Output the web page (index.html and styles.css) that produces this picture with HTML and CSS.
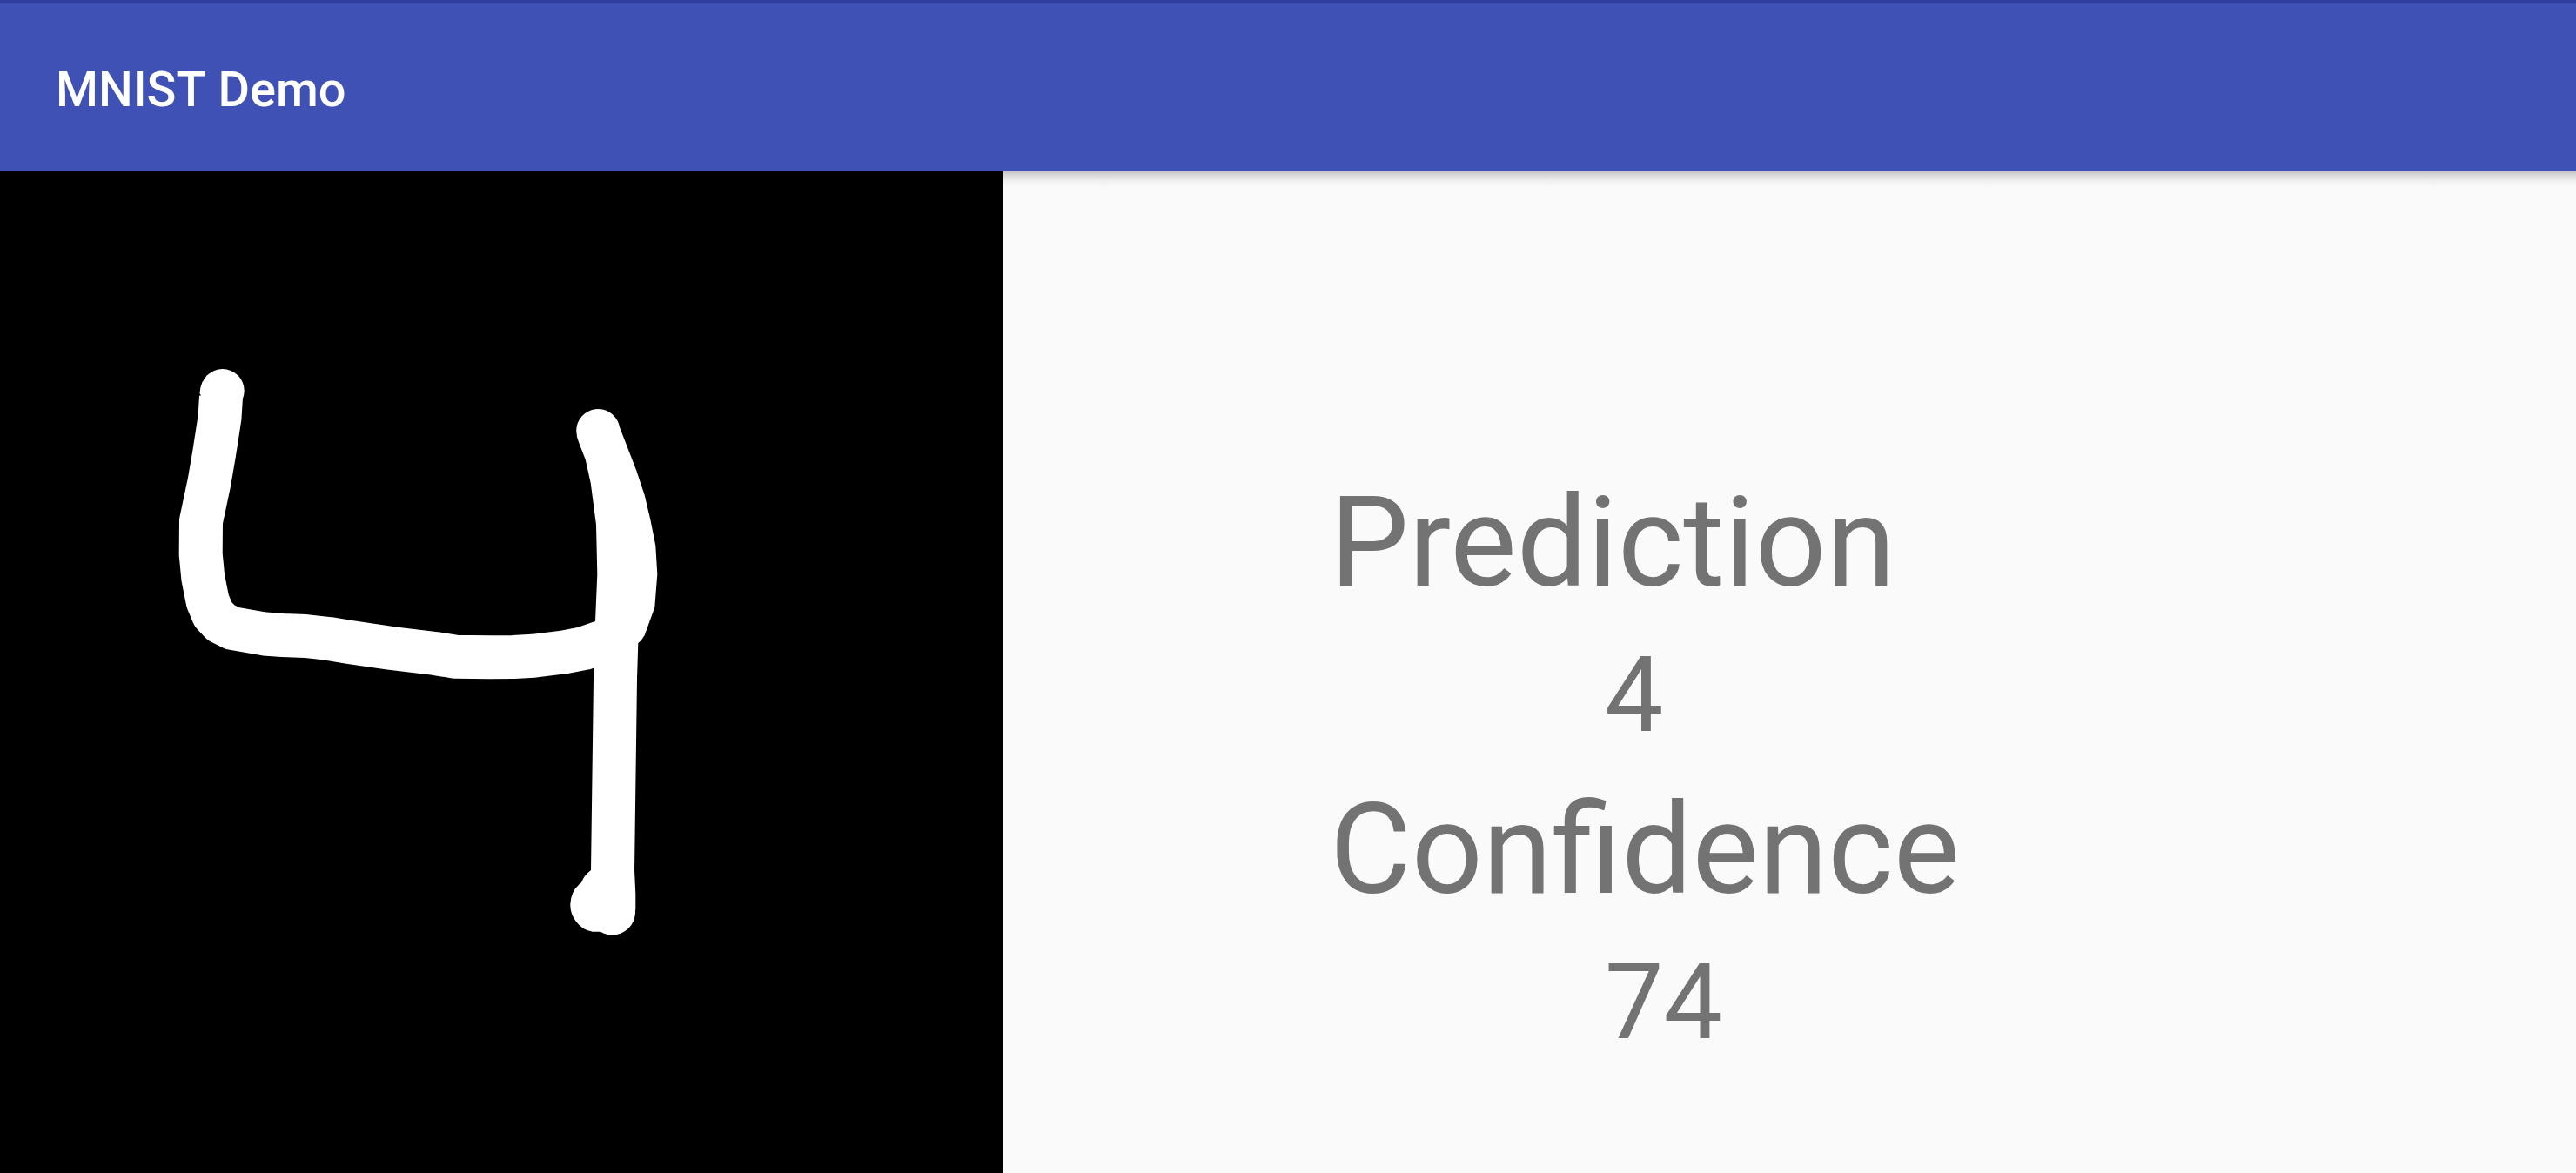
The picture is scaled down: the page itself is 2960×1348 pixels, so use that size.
FILE: index.html
```html
<!DOCTYPE html>
<html lang="en">
<head>
  <meta charset="utf-8">
  <meta name="viewport" content="width=device-width, initial-scale=1">
  <title>MNIST Demo</title>
  <link rel="stylesheet" href="styles.css">
</head>
<body>
  <header class="app-bar">
    <h1 class="app-title">MNIST Demo</h1>
  </header>
  <main class="content">
    <svg class="draw-pad" viewBox="0 0 1152 1152" role="img" aria-label="Handwritten digit">
      <g transform="translate(0 -196)">
        <circle class="ink" cx="255.7" cy="449" r="25"/>
        <path class="ink" d="M233 438Q230 444 229.5 452L240 470Z"/>
        <polyline class="stroke" points="254,456 252.5,480 246,522 240.5,554 231,599 230.7,637 233.3,664 238.7,691 245,706 254,715.5 267,722 304,728.5 325,730 351,731 378,734 402,738 450,745 500,751 523.5,754.7 563,755.3 590,755 613,753.7 649,749.3 671,745 700,735"/>
        <path class="ink" d="M662.3 494A25 25 0 0 1 711 487L712 491L716.7 503L731 540L740.7 569L747.3 597L753.3 627L755.3 660L752.3 698L740.7 730L736.7 736L733.3 739L732 780L729 1000L730.3 1027L730.3 1044Q730 1055 724 1062A26 26 0 0 1 691 1070.7L681 1070.7Q669 1069 662 1059Q655 1050 655.3 1039Q656 1023 668 1014.3Q671 1006 679 1000L682 780L684 714L686.3 660L685 603L678.7 555L672.7 528L665.3 509Q662 502 662.3 494Z"/>
        <circle class="ink" cx="703.5" cy="1048" r="26.5"/>
      </g>
    </svg>
    <section class="results">
      <dl class="result-list">
        <div class="result">
          <dt class="label">Prediction</dt>
          <dd class="value">4</dd>
        </div>
        <div class="result">
          <dt class="label">Confidence</dt>
          <dd class="value">74</dd>
        </div>
      </dl>
    </section>
  </main>
</body>
</html>
```
FILE: styles.css
```css
* {
  box-sizing: border-box;
}

body {
  display: flex;
  flex-direction: column;
  min-height: 100vh;
  margin: 0;
  background: #fafafa;
  color: #737373;
  font-family: Roboto, "Liberation Sans", sans-serif;
}

.app-bar {
  display: flex;
  align-items: center;
  height: 196px;
  padding: 5px 64px 0;
  border-top: 4px solid #303f9f;
  background: #3f51b5;
}

.app-title {
  margin: 0;
  color: #fff;
  font-size: 56px;
  font-weight: 500;
  line-height: 64px;
  font-kerning: none;
}

.content {
  display: flex;
  flex: 1;
}

.draw-pad {
  flex: none;
  height: calc(100vh - 196px);
  aspect-ratio: 1;
  background: #000;
}

.ink {
  fill: #fff;
}

.stroke {
  fill: none;
  stroke: #fff;
  stroke-width: 50;
  stroke-linejoin: round;
}

.results {
  flex: 1;
  padding: 332px 64px 0 376px;
  background: linear-gradient(#bfbfbf, #dcdcdc 6px, #f1f1f1 12px, #fafafa 20px) no-repeat top / 100% 20px;
}

.result-list {
  display: flex;
  flex-direction: column;
  gap: 2px;
  margin: 0;
}

.label {
  font-size: 144px;
  line-height: 191px;
}

.value {
  margin: 0 0 0 316px;
  font-size: 120px;
  line-height: 160px;
}
```
